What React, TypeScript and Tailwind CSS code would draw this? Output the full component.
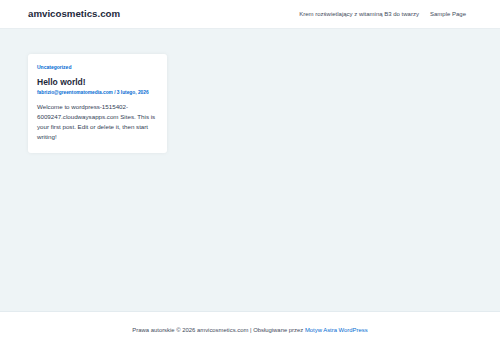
export default function App() {
  return (
    <div className="flex min-h-[348px] flex-col bg-[#eef4f6] font-['Liberation_Sans',Arial,sans-serif]">
      <header className="flex h-[29px] items-center justify-between border-b border-[#e8eef1] bg-white pl-[28px] pr-[34px]">
        <span className="text-[9.7px] font-bold text-[#1e293b]">amvicosmetics.com</span>
        <nav className="flex items-center gap-[11px] text-[6px] text-[#3f4b5c]">
          <a href="#">Krem rozświetlający z witaminą B3 do twarzy</a>
          <a href="#">Sample Page</a>
        </nav>
      </header>

      <main className="flex-1 px-[28px] pt-[25px]">
        <article className="w-[139px] rounded-[3px] bg-white px-[9px] pb-[11px] pt-[10px] shadow-[0_0_4px_rgba(0,0,0,0.06)]">
          <div className="text-[5px] font-bold text-[#046bd2]">Uncategorized</div>
          <h2 className="mt-[5px] text-[8.5px] font-bold leading-[10px] text-[#1e293b]">Hello world!</h2>
          <div className="mt-[2px] text-[4.8px] font-bold text-[#046bd2]">
            fabrizio@greentomatomedia.com / 3 lutego, 2026
          </div>
          <p className="mt-[6px] text-[6.2px] leading-[10px] text-[#334155]">
            Welcome to wordpress-1515402-6009247.cloudwaysapps.com Sites. This is your first post. Edit or delete it, then start writing!
          </p>
        </article>
      </main>

      <footer className="flex h-[37px] items-center justify-center border-t border-[#e3ebef] bg-white text-[5.9px] text-[#3f4b5c]">
        <span>
          Prawa autorskie © 2026 amvicosmetics.com | Obsługiwane przez{" "}
          <a href="#" className="text-[#046bd2]">Motyw Astra WordPress</a>
        </span>
      </footer>
    </div>
  );
}
